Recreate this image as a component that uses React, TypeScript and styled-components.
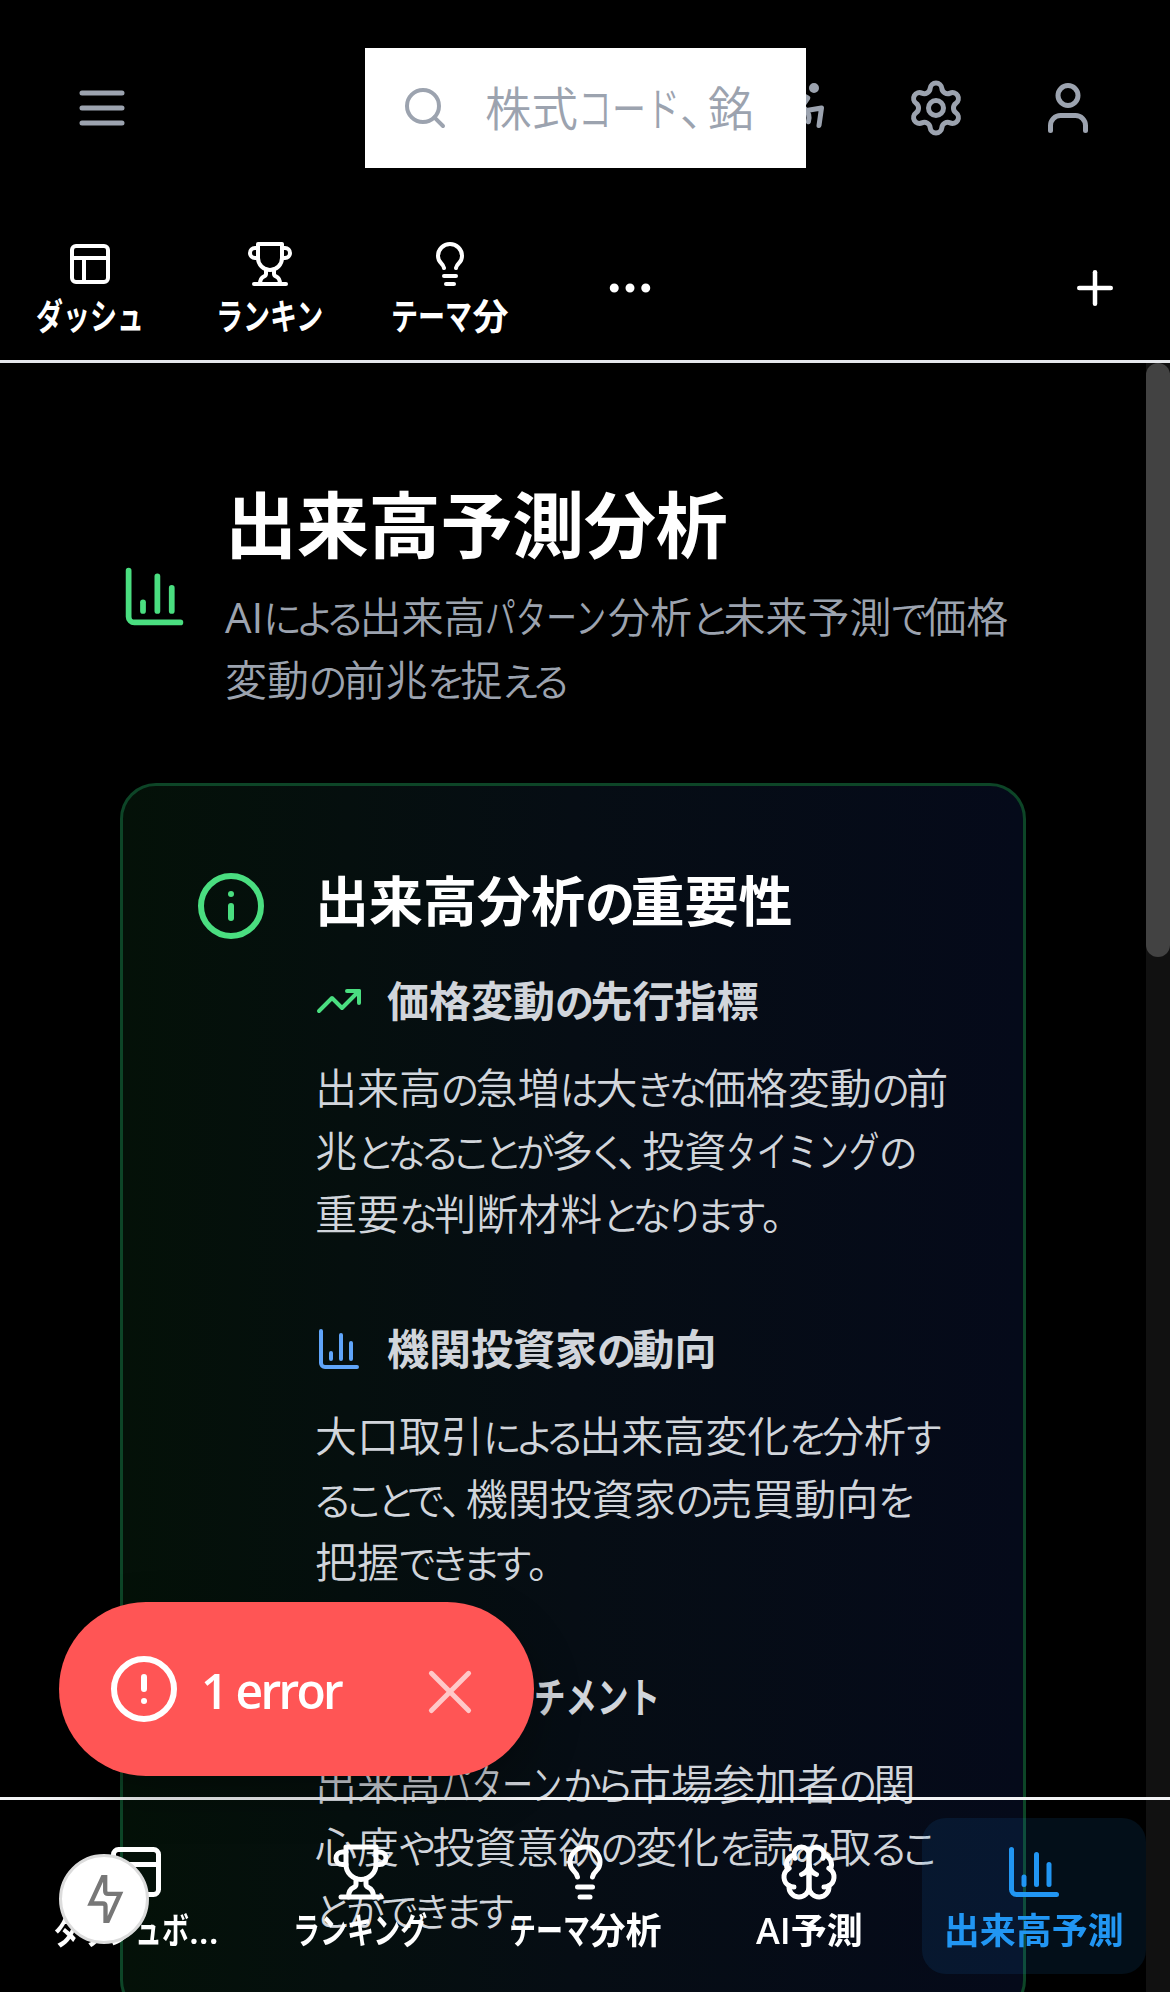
import React from "react";
import styled, { createGlobalStyle } from "styled-components";
import {
  Accessibility,
  Activity,
  ChartColumn,
  Ellipsis,
  Info,
  Lightbulb,
  PanelsTopLeft,
  Plus,
  Search,
  Settings,
  TrendingUp,
  User,
} from "lucide-react";

const GlobalStyle = createGlobalStyle`
  *, *::before, *::after { box-sizing: border-box; }
  body {
    margin: 0;
    background: #000;
    overflow: hidden;
    font-family: "Open Sans", "Noto Sans CJK JP", sans-serif;
  }
  h1, h2, h3, p { margin: 0; }
  button { border: 0; background: none; padding: 0; font: inherit; color: inherit; }
  svg { display: block; flex: none; }
`;

const Screen = styled.div`
  display: flex;
  flex-direction: column;
  width: 1170px;
  height: 1992px;
  overflow: hidden;
  background: #000;
  color: #fff;
`;

const Header = styled.header`
  display: flex;
  align-items: center;
  flex: none;
  height: 216px;
  padding: 0 48px;
  color: #9ca3af;
`;

const IconButton = styled.button`
  display: flex;
  flex: none;
  padding: 24px;
`;

const SearchBox = styled.div`
  position: relative;
  z-index: 1;
  display: flex;
  align-items: center;
  flex: none;
  width: 441px;
  height: 120px;
  margin-left: 209px;
  padding-left: 36px;
  gap: 36px;
  background: #fff;
  font-size: 46.5px;
  font-weight: 350;
  line-height: 68px;
  white-space: nowrap;
`;

const HeaderActions = styled.div`
  display: flex;
  gap: 24px;
  margin-left: -56px;
`;

const TabBar = styled.nav`
  display: flex;
  align-items: center;
  flex: none;
  height: 147px;
  border-bottom: 3px solid #e5e7eb;
`;

const Tab = styled.button`
  display: flex;
  flex-direction: column;
  align-items: center;
  justify-content: center;
  width: 180px;
  height: 144px;
  gap: 3px;
  font-size: 36px;
  font-weight: 600;
  line-height: 51px;
  white-space: nowrap;
`;

const LabelTab = styled(Tab)`
  padding-top: 6px;
`;

const AddTab = styled(Tab)`
  width: 150px;
  margin-left: auto;
`;

const Body = styled.div`
  display: flex;
  flex: 1;
  min-height: 0;
`;

const Content = styled.main`
  flex: 1;
  min-width: 0;
  padding: 118px 120px 0;
  overflow: hidden;
`;

const ScrollTrack = styled.div`
  width: 24px;
  background: #111;
`;

const ScrollThumb = styled.div`
  height: 594px;
  border-radius: 12px;
  background: #424242;
`;

const PageHead = styled.div`
  display: flex;
  align-items: center;
  gap: 36px;
  height: 231px;
  margin-bottom: 71px;
`;

const HeadText = styled.div`
  margin-top: -4px;
`;

const Title = styled.h1`
  font-size: 72px;
  font-weight: 700;
  line-height: 90px;
  letter-spacing: -0.2px;
  margin-bottom: 16px;
`;

const Lines = styled.p<{ $color: string }>`
  color: ${(p) => p.$color};
  font-size: 42px;
  font-weight: 350;
  line-height: 63px;
  white-space: nowrap;
`;

const Line = styled.span`
  display: block;
  height: 63px;
`;

const Latin = styled.span<{ $strong: boolean }>`
  font-weight: ${(p) => (p.$strong ? 600 : 400)};
`;

const Hiragana = styled.span`
  font-size: 0.93em;
  line-height: 0;
  letter-spacing: -0.08em;
  font-feature-settings: "palt" 1;
`;

const Katakana = styled.span<{ $count: number; $scale: number }>`
  display: inline-block;
  width: ${(p) => p.$count * p.$scale}em;
  transform: scaleX(${(p) => p.$scale});
  transform-origin: 0 50%;
`;

const Stop = styled.span`
  display: inline-block;
  width: 0.6em;
`;

const Card = styled.section`
  display: flex;
  align-items: flex-start;
  gap: 48px;
  padding: 72px;
  border: 3px solid #0d4527;
  border-radius: 36px;
  background: linear-gradient(90deg, #041108, #060d14 50%, #050a1a);
`;

const CardIcon = styled.div`
  margin-top: 12px;
`;

const CardTitle = styled.h2`
  padding-top: 1px;
  font-size: 54px;
  font-weight: 600;
  line-height: 84px;
  height: 85px;
  margin-bottom: 26px;
  white-space: nowrap;
`;

const Points = styled.div`
  display: flex;
  flex-direction: column;
  gap: 72px;
`;

const PointHead = styled.h3`
  display: flex;
  align-items: center;
  gap: 24px;
  height: 63px;
  margin-bottom: 24px;
  color: #d1d5db;
  font-size: 42px;
  font-weight: 600;
  line-height: 63px;
  white-space: nowrap;
`;

const BottomNav = styled.nav`
  position: fixed;
  left: 0;
  top: 1797px;
  z-index: 1;
  display: flex;
  align-items: center;
  width: 1170px;
  height: 195px;
  padding: 0 24px;
  border-top: 3px solid #f3f4f6;
`;

const NavItem = styled.button<{ $active?: boolean }>`
  display: flex;
  flex-direction: column;
  align-items: center;
  flex: 1 1 0;
  min-width: 0;
  height: 156px;
  padding-top: 24px;
  gap: 5px;
  border-radius: 24px;
  color: ${(p) => (p.$active ? "#2196f3" : "#fff")};
  background: ${(p) => (p.$active ? "rgba(33, 150, 243, 0.1)" : "none")};
  font-size: 36px;
  font-weight: 600;
  line-height: 48px;
  white-space: nowrap;
`;

const ErrorPill = styled.div`
  position: fixed;
  left: 59px;
  top: 1602px;
  z-index: 2;
  display: flex;
  align-items: center;
  width: 475px;
  height: 174px;
  padding: 0 57px 0 49px;
  border-radius: 87px;
  background: #ff5555;
  box-shadow: 0 18px 48px rgba(0, 0, 0, 0.3);
  font-size: 48px;
  font-weight: 600;
  white-space: nowrap;
`;

const PillText = styled.span`
  flex: 1;
  margin-left: 21px;
  padding-top: 2px;
  letter-spacing: -2.7px;
`;

const DevBadge = styled.div`
  position: fixed;
  left: 59px;
  top: 1854px;
  z-index: 3;
  display: flex;
  align-items: center;
  justify-content: center;
  width: 90px;
  height: 90px;
  padding-left: 2px;
  border: 3px solid #dcdcdc;
  border-radius: 50%;
  background: #fff;
`;

type IconProps = { size?: number | string; color?: string };

const StrokeIcon = ({ size = 24, color = "currentColor", children }: IconProps & { children: React.ReactNode }) => (
  <svg width={size} height={size} viewBox="0 0 24 24" fill="none" stroke={color} strokeWidth="2" strokeLinecap="round" strokeLinejoin="round">
    {children}
  </svg>
);

const MenuIcon = (p: IconProps) => (
  <StrokeIcon {...p}>
    <path d="M4 6h16M4 12h16M4 18h16" />
  </StrokeIcon>
);

const TrophyIcon = (p: IconProps) => (
  <StrokeIcon {...p}>
    <path d="M6 9H4.5a2.5 2.5 0 0 1 0-5H6" />
    <path d="M18 9h1.5a2.5 2.5 0 0 0 0-5H18" />
    <path d="M4 22h16" />
    <path d="M10 14.66V17c0 .55-.47.98-.97 1.21C7.85 18.75 7 20.24 7 22" />
    <path d="M14 14.66V17c0 .55.47.98.97 1.21C16.15 18.75 17 20.24 17 22" />
    <path d="M18 2H6v7a6 6 0 0 0 12 0V2Z" />
  </StrokeIcon>
);

const BrainIcon = (p: IconProps) => (
  <StrokeIcon {...p}>
    <path d="M12 5a3 3 0 1 0-5.997.125 4 4 0 0 0-2.526 5.77 4 4 0 0 0 .556 6.588A4 4 0 1 0 12 18Z" />
    <path d="M12 5a3 3 0 1 1 5.997.125 4 4 0 0 1 2.526 5.77 4 4 0 0 1-.556 6.588A4 4 0 1 1 12 18Z" />
    <path d="M15 13a4.5 4.5 0 0 1-3-4 4.5 4.5 0 0 1-3 4" />
    <path d="M17.599 6.5a3 3 0 0 0 .399-1.375" />
    <path d="M6.003 5.125A3 3 0 0 0 6.401 6.5" />
    <path d="M3.477 10.896a4 4 0 0 1 .585-.396" />
    <path d="M19.938 10.5a4 4 0 0 1 .585.396" />
    <path d="M6 18a4 4 0 0 1-1.967-.516" />
    <path d="M19.967 17.484A4 4 0 0 1 18 18" />
  </StrokeIcon>
);

/* Sets each script in its own width: kanji full, kana narrower, as a proportional Japanese UI face does. */
function Jp({ text, strong = false }: { text: string; strong?: boolean }) {
  const runs = text.match(/[\u3040-\u309f]+|[\u30a0-\u30ff]+|[\u3001\u3002]|[\u0020-\u007e]+|[\u4e00-\u9fff]+/g) ?? [];
  return (
    <span>
      {runs.map((run, i) => {
        if (/[\u3001\u3002]/.test(run)) return <Stop key={i}>{run}</Stop>;
        if (/[\u3040-\u309f]/.test(run)) return <Hiragana key={i}>{run}</Hiragana>;
        if (/[\u30a0-\u30ff]/.test(run))
          return <Katakana key={i} $count={run.length} $scale={strong ? 0.75 : 0.73}>{run}</Katakana>;
        if (/[\u0020-\u007e]/.test(run)) return <Latin key={i} $strong={strong}>{run}</Latin>;
        return <React.Fragment key={i}>{run}</React.Fragment>;
      })}
    </span>
  );
}

const tabs = [
  { icon: PanelsTopLeft, label: "ダッシュ" },
  { icon: TrophyIcon, label: "ランキン" },
  { icon: Lightbulb, label: "テーマ分" },
];

const points = [
  {
    icon: TrendingUp,
    color: "#4ade80",
    title: "価格変動の先行指標",
    lines: ["出来高の急増は大きな価格変動の前", "兆となることが多く、投資タイミングの", "重要な判断材料となります。"],
  },
  {
    icon: ChartColumn,
    color: "#60a5fa",
    title: "機関投資家の動向",
    lines: ["大口取引による出来高変化を分析す", "ることで、機関投資家の売買動向を", "把握できます。"],
  },
  {
    icon: Activity,
    color: "#c084fc",
    title: "市場センチメント",
    lines: ["出来高パターンから市場参加者の関", "心度や投資意欲の変化を読み取るこ", "とができます。"],
  },
];

const navItems = [
  { icon: PanelsTopLeft, label: "ダッシュボ..." },
  { icon: TrophyIcon, label: "ランキング" },
  { icon: Lightbulb, label: "テーマ分析" },
  { icon: BrainIcon, label: "AI予測" },
  { icon: ChartColumn, label: "出来高予測", active: true },
];

export default function App() {
  return (
    <Screen>
      <GlobalStyle />
      <Header>
        <IconButton><MenuIcon size={60} /></IconButton>
        <SearchBox>
          <Search size={48} />
          <Jp text="株式コード、銘" />
        </SearchBox>
        <HeaderActions>
          <IconButton><Accessibility size={60} /></IconButton>
          <IconButton><Settings size={60} /></IconButton>
          <IconButton><User size={60} /></IconButton>
        </HeaderActions>
      </Header>
      <TabBar>
        {tabs.map(({ icon: Icon, label }) => (
          <LabelTab key={label}>
            <Icon size={48} />
            <Jp text={label} strong />
          </LabelTab>
        ))}
        <Tab><Ellipsis size={54} /></Tab>
        <AddTab><Plus size={54} /></AddTab>
      </TabBar>
      <Body>
        <Content>
          <PageHead>
            <ChartColumn size={69} color="#4ade80" />
            <HeadText>
              <Title>出来高予測分析</Title>
              <Lines $color="#9ca3af">
                <Line><Jp text="AIによる出来高パターン分析と未来予測で価格" /></Line>
                <Line><Jp text="変動の前兆を捉える" /></Line>
              </Lines>
            </HeadText>
          </PageHead>
          <Card>
            <CardIcon><Info size={72} color="#4ade80" /></CardIcon>
            <div>
              <CardTitle><Jp text="出来高分析の重要性" strong /></CardTitle>
              <Points>
                {points.map(({ icon: Icon, color, title, lines }) => (
                  <div key={title}>
                    <PointHead>
                      <Icon size={48} color={color} />
                      <Jp text={title} strong />
                    </PointHead>
                    <Lines $color="#d1d5db">
                      {lines.map((l) => (
                        <Line key={l}><Jp text={l} /></Line>
                      ))}
                    </Lines>
                  </div>
                ))}
              </Points>
            </div>
          </Card>
        </Content>
        <ScrollTrack><ScrollThumb /></ScrollTrack>
      </Body>
      <BottomNav>
        {navItems.map(({ icon: Icon, label, active }) => (
          <NavItem key={label} $active={active}>
            <Icon size={60} />
            <Jp text={label} strong />
          </NavItem>
        ))}
      </BottomNav>
      <ErrorPill>
        <svg width="72" height="72" viewBox="0 0 24 24" fill="none" stroke="#fff" strokeWidth="2" strokeLinecap="round">
          <circle cx="12" cy="12" r="10" />
          <path d="M12 8v4M12 16h.01" />
        </svg>
        <PillText>1 error</PillText>
        <svg width="54" height="54" viewBox="0 0 54 54" fill="none" stroke="#ffc8c8" strokeWidth="5" strokeLinecap="round">
          <path d="M8.4 11.3l37.2 37.2M45.6 11.3L8.4 48.5" />
        </svg>
      </ErrorPill>
      <DevBadge>
        <svg width="37" height="48" viewBox="0 0 37 48" fill="none" stroke="#777" strokeWidth="4.3">
          <path d="M18.2-3V16q0 2.8 2.8 2.8h12L18.5 51V31.3q0-2.8-2.8-2.8H3.6L18.2-3" />
        </svg>
      </DevBadge>
    </Screen>
  );
}
